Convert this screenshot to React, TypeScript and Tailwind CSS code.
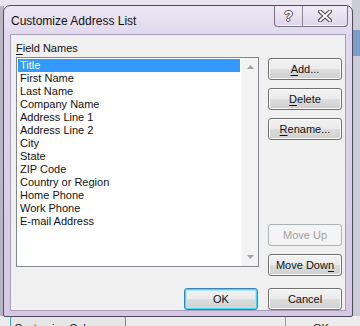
import type { ReactNode } from 'react';

const fields = [
  'Title',
  'First Name',
  'Last Name',
  'Company Name',
  'Address Line 1',
  'Address Line 2',
  'City',
  'State',
  'ZIP Code',
  'Country or Region',
  'Home Phone',
  'Work Phone',
  'E-mail Address',
];

function Key({ children }: { children: ReactNode }) {
  return <span className="underline underline-offset-[2px] decoration-1">{children}</span>;
}

function Btn({
  children,
  disabled,
  isDefault,
}: {
  children: ReactNode;
  disabled?: boolean;
  isDefault?: boolean;
}) {
  const base = 'w-[74px] h-[22px] rounded-[3px] border text-[11px] leading-none flex items-center justify-center';
  if (disabled) {
    return (
      <div className={`${base} border-[#adb2b5] bg-[#f4f4f4] text-[#a0a0a0]`}>{children}</div>
    );
  }
  return (
    <div
      className={`${base} ${
        isDefault
          ? 'border-[#3c7fb1] shadow-[inset_0_0_0_1px_#48d8fb,inset_0_0_0_2px_#aee8fa]'
          : 'border-[#707070] shadow-[inset_0_0_0_1px_#fcfcfc]'
      } bg-[linear-gradient(to_bottom,#f2f2f2_0%,#ebebeb_50%,#dddddd_51%,#cfcfcf_100%)] text-[#111]`}
    >
      {children}
    </div>
  );
}

function Arrow({ down }: { down?: boolean }) {
  return (
    <svg width="7" height="4" viewBox="0 0 7 4">
      <path d={down ? 'M0 0h7L3.5 4z' : 'M0 4h7L3.5 0z'} fill="#a3a3a3" />
    </svg>
  );
}

export default function App() {
  return (
    <div className="relative w-[360px] h-[326px] overflow-hidden bg-[#e9e5ee] font-['Liberation_Sans',Arial,sans-serif]">
      {/* what lies behind the dialog */}
      <div className="absolute left-0 top-[6px] w-[4px] h-[320px] bg-[#b9b5c2]" />
      <div className="absolute right-0 top-0 w-[8px] h-full bg-[#c9ccd5]">
        <div className="mt-[30px] h-[26px] bg-[#7d9ccc]" />
      </div>
      <div className="absolute left-0 top-[316px] w-[360px] h-[10px] bg-[#ececec]" />
      <div className="absolute left-[10px] top-[315px] w-[116px] h-[22px] border border-[#3c9fc0] rounded-[3px] bg-[#e6e6e6] text-[11px] text-[#111] flex justify-center pt-[4px]">
        Customize Columns...
      </div>
      <div className="absolute left-[285px] top-[316px] w-[60px] h-[12px] border-l border-[#9a9a9a] text-[11px] text-[#111] pl-[27px] pt-[4px]">
        OK
      </div>

      {/* dialog */}
      <div className="relative pl-[3px] pt-[5px]">
        <div className="w-[350px] h-[312px] rounded-t-[7px] rounded-b-[2px] border border-[#4f4a5a] bg-[linear-gradient(to_bottom,#ebe6f2_0px,#e0d8ec_30px,#d4c8e5_100%)] flex flex-col">
          {/* title bar */}
          <div className="h-[31px] flex items-start pl-[7px] pr-[4px]">
            <div className="self-center text-[12px] text-[#111] pt-[1px]">Customize Address List</div>
            <div className="ml-auto flex h-[21px] rounded-b-[4px] border border-t-0 border-[#7a7289] bg-[linear-gradient(to_bottom,#f1edf7,#ddd5ea)] shadow-[inset_0_-1px_0_#f5f2fa]">
              <div className="w-[28px] flex items-center justify-center border-r border-[#8e879b] text-[14px] font-bold text-white [text-shadow:1px_0_#4a4554,-1px_0_#4a4554,0_1px_#4a4554,0_-1px_#4a4554]">
                ?
              </div>
              <div className="w-[44px] flex items-center justify-center">
                <svg width="14" height="12" viewBox="0 0 14 12">
                  <path d="M2 1.5L12 10.5M12 1.5L2 10.5" stroke="#4a4554" strokeWidth="4.2" strokeLinecap="square" />
                  <path d="M2 1.5L12 10.5M12 1.5L2 10.5" stroke="#ffffff" strokeWidth="2" strokeLinecap="square" />
                </svg>
              </div>
            </div>
          </div>

          {/* client area */}
          <div className="mx-[6px] mb-[5px] flex-1 border border-[#a99fbb] bg-[#f0f0f0] pl-[5px] pt-[7px] text-[11px] text-[#111]">
            <div className="h-[13px] leading-[13px]">
              <Key>F</Key>ield Names
            </div>
            <div className="mt-[2px] flex">
              <div className="w-[243px] h-[210px] border border-[#828790] bg-white flex">
                <div className="flex-1 p-[1px]">
                  {fields.map((f, i) => (
                    <div
                      key={f}
                      className={`h-[13px] leading-[13px] pl-[2px] ${
                        i === 0 ? 'bg-[#3399ff] text-white' : 'text-[#111]'
                      }`}
                    >
                      {f}
                    </div>
                  ))}
                </div>
                <div className="w-[17px] bg-[#f3f3f3] border-l border-[#f8f8f8] flex flex-col items-center justify-between py-[7px]">
                  <Arrow />
                  <Arrow down />
                </div>
              </div>
              <div className="ml-[9px] mt-[1px] flex flex-col gap-[8px]">
                <Btn>
                  <Key>A</Key>dd...
                </Btn>
                <Btn>
                  <Key>D</Key>elete
                </Btn>
                <Btn>
                  <Key>R</Key>ename...
                </Btn>
                <div className="h-[68px]" />
                <Btn disabled>Move Up</Btn>
                <Btn>
                  Move Dow<Key>n</Key>
                </Btn>
              </div>
            </div>
            <div className="mt-[12px] flex justify-end gap-[10px] pr-[3px]">
              <Btn isDefault>OK</Btn>
              <Btn>Cancel</Btn>
            </div>
          </div>
        </div>
      </div>
    </div>
  );
}
